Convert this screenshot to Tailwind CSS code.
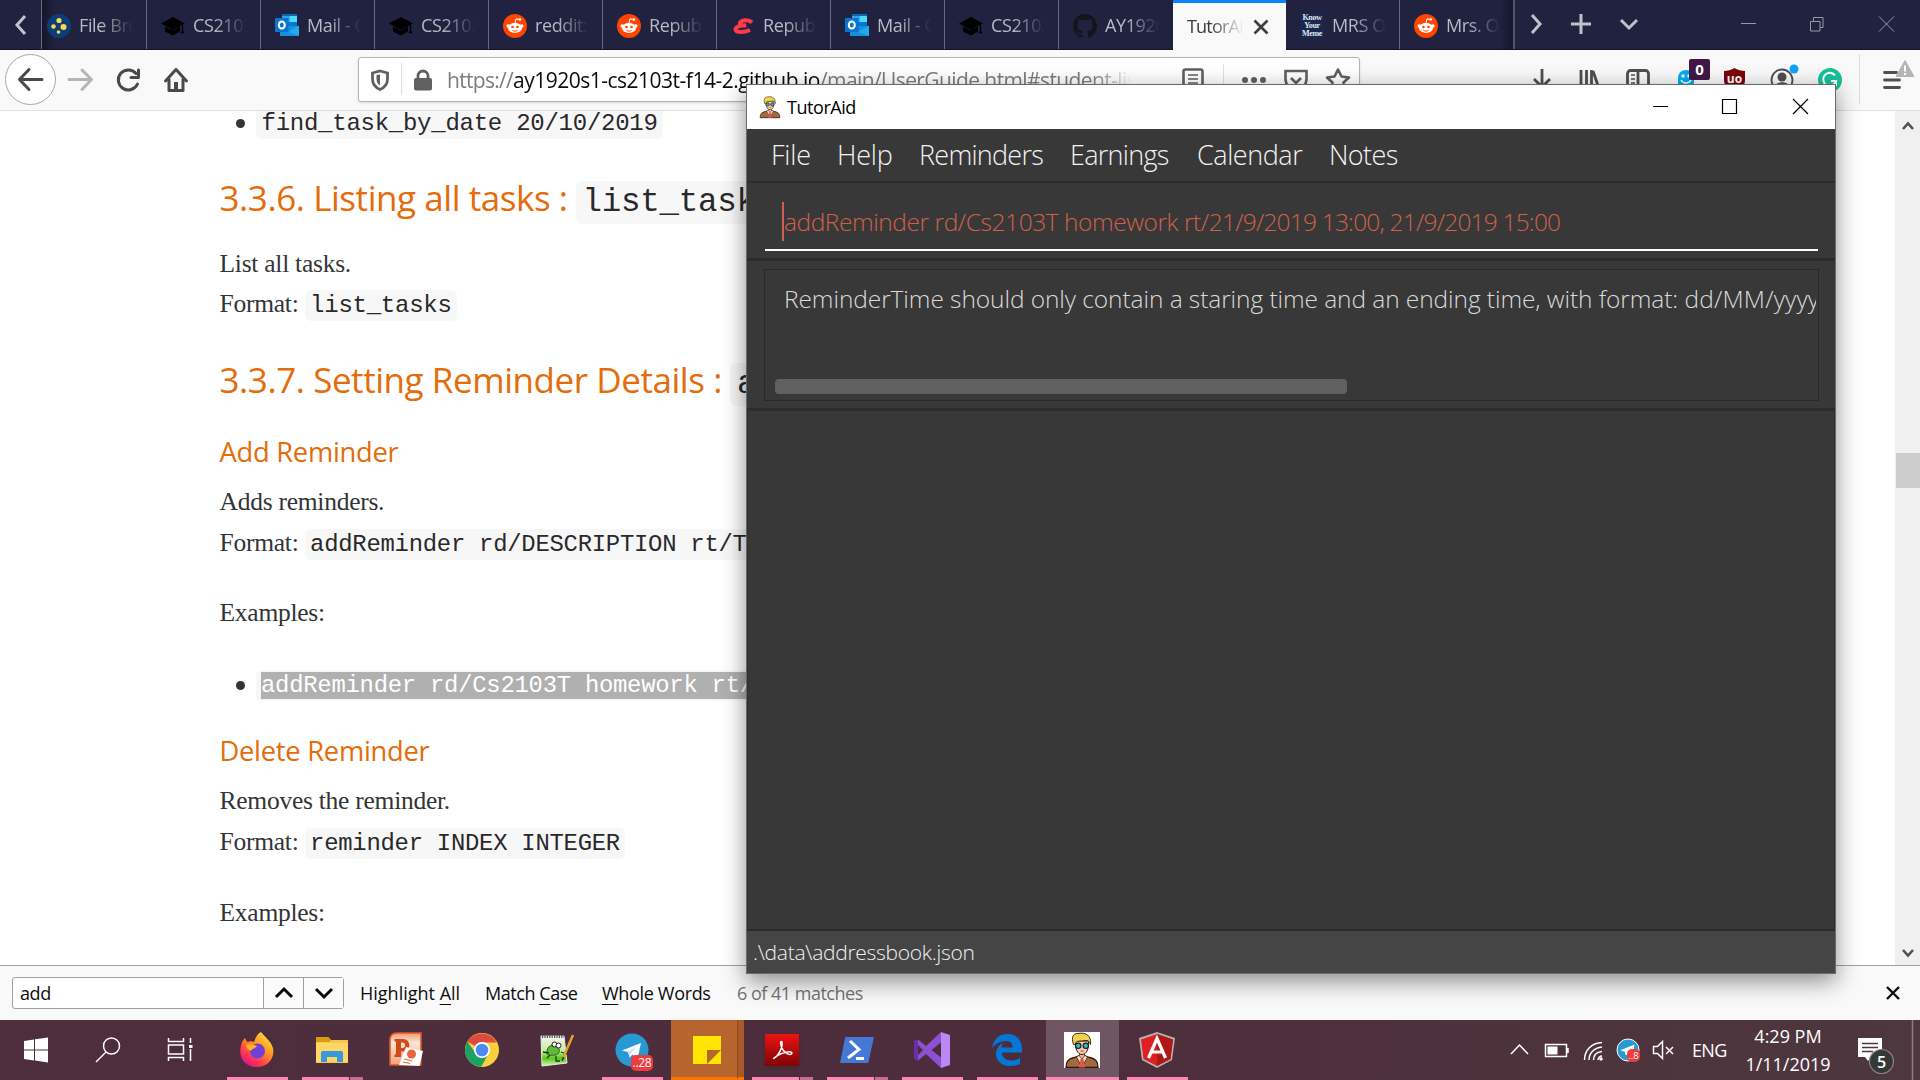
<!DOCTYPE html>
<html lang="en">
<head>
<meta charset="utf-8">
<title>TutorAid</title>
<script src="https://cdn.jsdelivr.net/npm/@tailwindcss/browser@4"></script>
</head>
<body class="w-[1920px] h-[1080px] overflow-hidden bg-white font-['Open_Sans','Noto_Sans',sans-serif]">
<svg class="hidden">
  <symbol id="reddit" viewBox="0 0 24 24"><circle cx="12" cy="12" r="12" fill="#ff4500"/><ellipse cx="12" cy="14" rx="7" ry="5" fill="#fff"/><circle cx="5.2" cy="12" r="1.8" fill="#fff"/><circle cx="18.8" cy="12" r="1.8" fill="#fff"/><path d="M12 9l1-4.200 3.500.8" fill="none" stroke="#fff" stroke-width="1"/><circle cx="16.800" cy="5.600" r="1.400" fill="#fff"/><circle cx="9.500" cy="13" r="1.300" fill="#ff4500"/><circle cx="14.500" cy="13" r="1.300" fill="#ff4500"/><path d="M9.300 16.200c1.500 1.200 4 1.200 5.400 0" fill="none" stroke="#ff4500" stroke-width="1"/></symbol>
  <symbol id="cap" viewBox="0 0 24 24"><path d="M12 3L24 9.500 12 16 0 9.500z" fill="#000"/><path d="M4 12.500v5L12 21.500l7-4v-5L12 16.500z" fill="#000"/><path d="M21.500 10.500v6l1 2h-2l1-2" stroke="#000" stroke-width="1.300"/></symbol>
  <symbol id="outlook" viewBox="0 0 24 24"><path d="M7 0h15v12H7z" fill="#1066b5"/><path d="M7 2h7.500v6H7z" fill="#28a8ea"/><path d="M14.500 2H22v6h-7.500z" fill="#50d9ff"/><path d="M7 8h15v6H7z" fill="#0078d4"/><path d="M5 12h19v10H5z" fill="#1490df"/><path d="M24 11.500L13 18l11 4z" fill="#28a8ea"/><path d="M0 4h13.500v14H0z" fill="#0a74cf"/><ellipse cx="6.800" cy="11" rx="3" ry="3.500" fill="none" stroke="#fff" stroke-width="2"/></symbol>
  <symbol id="telegram" viewBox="0 0 36 36"><circle cx="18" cy="18" r="16.500" fill="#2799d3"/><path d="M8 18.500L27 11l-3.500 15.500-5-4-3 3-1.500-5.500z" fill="#fff"/><path d="M14 20l9-6-7 8-.5 3.500z" fill="#c4dcec"/></symbol>
  <symbol id="tutor" viewBox="0 0 36 36"><path d="M2 35.500c0-6 2-8.500 8-10l5-1.500h6l5 1.500c6 1.500 8 4 8 10z" fill="#a5693a" stroke="#2b1a10" stroke-width="1.300"/><path d="M12.500 25L18 35l5.500-10-3-2h-5z" fill="#f4e0cd" stroke="#3a2416" stroke-width=".8"/><path d="M16.500 27h3l1.500 8.500h-6z" fill="#e2574f"/><path d="M15.500 20h5v4L18 27l-2.500-3z" fill="#eebc95" stroke="#54351f" stroke-width=".8"/><path d="M11.500 9h13c.5 8-2 13.500-6.500 13.500S11 17 11.500 9z" fill="#f6cda8" stroke="#2b1a10" stroke-width="1"/><path d="M9.500 12.500C7 5 9 1.500 14 1.500c8-1.500 13.500 2 12.500 11-1-3-2.500-4.500-5.500-4-5 1-9.500-.5-9.500 4z" fill="#f1d152" stroke="#3b2d10" stroke-width="1"/><circle cx="14.200" cy="13.800" r="2.700" fill="#3fb3bd" stroke="#14252c" stroke-width="1.200"/><circle cx="21.800" cy="13.800" r="2.700" fill="#3fb3bd" stroke="#14252c" stroke-width="1.200"/><path d="M16.500 19h3" stroke="#8d4433" stroke-width="1"/></symbol>
</svg>
<div class="flex flex-col w-full h-full">

  <!-- tab strip -->
  <header class="flex h-[50px] shrink-0 bg-[#20223f] border-b border-[#13142b] text-[18px] text-[#b9bac6]">
    <div class="w-[42px] border-r border-[#6a6b7e] flex items-center justify-center"><svg class="w-5 h-6" viewBox="0 0 20 24" fill="none" stroke="#c3c4ce" stroke-width="3"><path d="M14 3L6 12l8 9"/></svg></div>
    <div class="w-[105px] border-r border-[#6a6b7e] flex items-center pt-[2px] pl-[5px] gap-2 bg-linear-to-r from-[#15162c] to-[#20223f] to-12%"><svg class="size-6 shrink-0" viewBox="0 0 24 24"><circle cx="12" cy="12" r="12" fill="#0b3d78"/><g fill="#ffd94a"><circle cx="12" cy="6.500" r="2.600"/><circle cx="6.500" cy="12.500" r="2.300"/><circle cx="16.500" cy="13" r="3"/><circle cx="11.500" cy="18" r="1.800"/></g></svg><span class="w-[54px] overflow-hidden whitespace-nowrap tracking-[-0.4px] mask-r-from-40%">File Bro</span></div>
    <div class="w-[114px] border-r border-[#6a6b7e] flex items-center pt-[2px] pl-[14px] gap-2"><svg class="size-6 shrink-0"><use href="#cap"/></svg><span class="w-[54px] overflow-hidden whitespace-nowrap tracking-[-0.4px] mask-r-from-40%">CS2103</span></div>
    <div class="w-[114px] border-r border-[#6a6b7e] flex items-center pt-[2px] pl-[14px] gap-2"><svg class="size-6 shrink-0"><use href="#outlook"/></svg><span class="w-[54px] overflow-hidden whitespace-nowrap tracking-[-0.4px] mask-r-from-40%">Mail - O</span></div>
    <div class="w-[114px] border-r border-[#6a6b7e] flex items-center pt-[2px] pl-[14px] gap-2"><svg class="size-6 shrink-0"><use href="#cap"/></svg><span class="w-[54px] overflow-hidden whitespace-nowrap tracking-[-0.4px] mask-r-from-40%">CS2103</span></div>
    <div class="w-[114px] border-r border-[#6a6b7e] flex items-center pt-[2px] pl-[14px] gap-2"><svg class="size-6 shrink-0"><use href="#reddit"/></svg><span class="w-[54px] overflow-hidden whitespace-nowrap tracking-[-0.4px] mask-r-from-40%">reddit: t</span></div>
    <div class="w-[114px] border-r border-[#6a6b7e] flex items-center pt-[2px] pl-[14px] gap-2"><svg class="size-6 shrink-0"><use href="#reddit"/></svg><span class="w-[54px] overflow-hidden whitespace-nowrap tracking-[-0.4px] mask-r-from-40%">Republ</span></div>
    <div class="w-[114px] border-r border-[#6a6b7e] flex items-center pt-[2px] pl-[14px] gap-2"><svg class="size-6 shrink-0" viewBox="0 0 24 24" fill="none" stroke="#ff3b48" stroke-width="4"><path d="M21 8.500C17.500 5 10 6 9 9c-.5 2.500 3 2.800 6 2.200C9 11 4.500 13 4.500 15.500c.5 3.500 9 3 14.500.5"/></svg><span class="w-[54px] overflow-hidden whitespace-nowrap tracking-[-0.4px] mask-r-from-40%">Republ</span></div>
    <div class="w-[114px] border-r border-[#6a6b7e] flex items-center pt-[2px] pl-[14px] gap-2"><svg class="size-6 shrink-0"><use href="#outlook"/></svg><span class="w-[54px] overflow-hidden whitespace-nowrap tracking-[-0.4px] mask-r-from-40%">Mail - O</span></div>
    <div class="w-[114px] border-r border-[#6a6b7e] flex items-center pt-[2px] pl-[14px] gap-2"><svg class="size-6 shrink-0"><use href="#cap"/></svg><span class="w-[54px] overflow-hidden whitespace-nowrap tracking-[-0.4px] mask-r-from-40%">CS2103</span></div>
    <div class="w-[114px] flex items-center pt-[2px] pl-[14px] gap-2"><svg class="size-6 shrink-0" viewBox="0 0 16 16" fill="#14151c"><path d="M8 0C3.580 0 0 3.580 0 8c0 3.540 2.290 6.530 5.470 7.590.4.070.55-.17.55-.38 0-.19-.01-.82-.01-1.490-2.010.37-2.530-.49-2.690-.94-.09-.23-.48-.94-.82-1.130-.28-.15-.68-.52-.01-.53.63-.01 1.080.58 1.230.82.72 1.210 1.870.87 2.330.66.07-.52.28-.87.51-1.070-1.780-.2-3.640-.89-3.640-3.950 0-.87.31-1.590.82-2.150-.08-.2-.36-1.020.08-2.120 0 0 .67-.21 2.200.82.64-.18 1.320-.27 2-.27s1.360.09 2 .27c1.530-1.040 2.200-.82 2.200-.82.44 1.100.16 1.920.08 2.120.51.56.82 1.270.82 2.150 0 3.070-1.870 3.750-3.650 3.950.29.25.54.73.54 1.480 0 1.070-.01 1.930-.01 2.200 0 .21.15.46.55.38A8.010 8.010 0 0016 8c0-4.420-3.580-8-8-8z"/></svg><span class="w-[54px] overflow-hidden whitespace-nowrap tracking-[-0.4px] mask-r-from-40%">AY1920</span></div>
    <div class="w-[113px] h-[50px] bg-[#f9f9fa] border-t-3 border-[#0a84ff] flex items-center pl-[14px] gap-[9px]"><span class="w-[57px] overflow-hidden whitespace-nowrap tracking-[-0.8px] text-[#3a3a3d] mask-r-from-40%">TutorAid</span><svg class="size-4" viewBox="0 0 16 16" stroke="#3e3e40" stroke-width="2.600"><path d="M1.500 1.500l13 13M14.500 1.500l-13 13"/></svg></div>
    <div class="w-[114px] border-r border-[#6a6b7e] flex items-center pt-[2px] pl-[14px] gap-2"><span class="size-6 shrink-0 bg-[#17294f] text-[#e3e6ee] text-[8px] leading-[8px] font-bold font-['Liberation_Serif',serif] text-center tracking-[-0.3px]">Know<br>Your<br>Meme</span><span class="w-[54px] overflow-hidden whitespace-nowrap tracking-[-0.4px] mask-r-from-40%">MRS O</span></div>
    <div class="w-[115px] border-r-2 border-[#55566b] flex items-center pt-[2px] pl-[14px] gap-2 bg-linear-to-l from-[#15162c] to-[#20223f] to-12%"><svg class="size-6 shrink-0"><use href="#reddit"/></svg><span class="w-[54px] overflow-hidden whitespace-nowrap tracking-[-0.4px] mask-r-from-40%">Mrs. Ob</span></div>
    <svg class="w-[404px] h-[49px]" viewBox="1515 0 404 49" fill="none" stroke="#c0c1cb" stroke-width="3"><path d="M1532 15l8 9-8 9M1571 24h20M1581 14v20M1621 20l8 8 8-8"/><g stroke="#9899a8" stroke-width="1"><path d="M1741 23.500h15M1810.500 21.500h9.500v9.500h-9.500zM1813.500 21v-3.500h9.500v10h-3M1879 16.500l15 15M1894 16.500l-15 15"/></g></svg>
  </header>

  <!-- navigation toolbar -->
  <nav class="flex h-[61px] shrink-0 bg-[#f9f9fa] border-b border-[#e0e0e2]">
    <svg class="w-[358px] h-[60px]" viewBox="0 50 358 60" fill="none" stroke="#4a4a4c" stroke-width="3" stroke-linecap="round" stroke-linejoin="round"><circle cx="30.500" cy="79.500" r="25" fill="#fff" stroke="#a8a8a9" stroke-width="1"/><path d="M20 79.500h22M29 69.500L19.500 79.500l9.500 10"/><path stroke="#b5b5b6" d="M69 79.500h22M82 70l9.500 9.500-9.500 10"/><path d="M137.500 84a10 10 0 1 1-1.500-10.500M138.500 70v7.500h-7.500"/><path d="M165.500 81L176 69.500 186.500 81M169 79.500v11h14v-11" /><path d="M176 82v7" stroke-width="4" stroke-linecap="butt"/></svg>
    <div class="w-[1002px] h-[45px] mt-[7px] bg-white border border-[#b4b4b6] rounded-[3px] shadow-sm flex items-center shrink-0">
      <svg class="w-[88px] h-[43px] shrink-0" viewBox="359 58 88 43" fill="none" stroke="#606062"><path stroke-width="2.800" d="M380 71l7.500 2v6c0 5-3 8.500-7.500 10.500-4.500-2-7.500-5.500-7.500-10.500v-6z"/><path d="M380 74.500v11c-2.500-1.500-3.500-4-3.500-6.500v-4z" fill="#606062" stroke="none"/><path d="M401.500 63v32" stroke="#e0e0e2"/><path d="M418 80v-4a5 5 0 0 1 10 0v4" stroke-width="2.800"/><rect x="414" y="78" width="18" height="12.500" rx="2" fill="#606062" stroke="none"/></svg>
      <div class="w-[692px] overflow-hidden whitespace-nowrap text-[21px] text-[#7d7d80] pt-[3px] mask-r-from-93% mask-r-to-99%"><span class="tracking-[-0.7px]">https://</span><span class="text-[#0c0c0d] tracking-[-0.5px]">ay1920s1-cs2103t-f14-2.github.io</span><span class="tracking-[-0.6px]">/main/UserGuide.html#student-lis</span></div>
      <svg class="w-[220px] h-[43px]" viewBox="1139 58 220 43" fill="none" stroke="#606062" stroke-width="2.600"><rect x="1183.500" y="69.500" width="19" height="22" rx="2"/><path stroke-width="1.500" d="M1188 75h10M1188 79h10M1188 83h10"/><path d="M1223.500 64v30" stroke="#e0e0e2" stroke-width="1"/><g fill="#606062" stroke="none"><circle cx="1245" cy="80" r="3"/><circle cx="1254" cy="80" r="3"/><circle cx="1263" cy="80" r="3"/></g><path d="M1285.500 71h21v8a10.500 10.500 0 0 1-21 0zM1291 78l5 5 5-5"/><path stroke-linejoin="round" d="M1338 69.500l3.500 7 7.500 1-5.500 5 1.500 8-7-4-7 4 1.500-8-5.500-5 7.500-1z"/></svg>
    </div>
    <svg class="w-[560px] h-[60px]" viewBox="1360 50 560 60" fill="none" stroke="#4f4f51" stroke-width="2.800"><path d="M1542 69v19M1534 79l8 8 8-8"/><path d="M1581 70v20M1586.500 70v20M1591.500 70v20M1593 71l6.500 19"/><rect x="1627.500" y="70.500" width="21" height="18" rx="3"/><path d="M1638 71v17"/><path stroke-width="1.500" d="M1631 75h4M1631 79h4M1631 83h4"/><path d="M1678 92V78a8 8 0 0 1 16 0v14z" fill="#00aef0" stroke="none"/><circle cx="1683" cy="76" r="1.700" fill="#fff" stroke="none"/><circle cx="1689" cy="76" r="1.700" fill="#fff" stroke="none"/><path d="M1681 80c2 4 8 4 10 0" stroke="#fff" stroke-width="1.500"/><rect x="1689" y="59" width="21" height="21" rx="2" fill="#431847" stroke="none"/><text x="1699.500" y="75" font-size="15" font-weight="700" fill="#fff" stroke="none" text-anchor="middle">0</text><path d="M1734.500 68c3 2 7 3 10.500 3v9c0 6-5 10-10.500 12-5.500-2-10.500-6-10.500-12v-9c3.500 0 7.500-1 10.500-3z" fill="#7c0308" stroke="none"/><text x="1734.500" y="83" font-size="12" font-weight="700" fill="#fff" stroke="none" text-anchor="middle">uo</text><circle cx="1782" cy="80" r="10.500" stroke-width="1.800"/><circle cx="1782" cy="77" r="4.500" fill="#4f4f51" stroke="none"/><path d="M1775 86c1-5 13-5 14 0-2 4-12 4-14 0z" fill="#4f4f51" stroke="none"/><circle cx="1794" cy="69" r="4.500" fill="#0aa6f8" stroke="none"/><circle cx="1830" cy="80" r="12" fill="#15c39a" stroke="none"/><path d="M1835 75.500a6.500 6.500 0 1 0 1 5.500h-5M1836 81v5" stroke="#fff" stroke-width="2"/><path d="M1859.500 54v50" stroke="#dcdcde" stroke-width="1"/><path stroke-linecap="round" d="M1884.500 72.500h12M1884.500 80h15M1884.500 87.500h15"/><path d="M1905 60.500l9 16h-18z" fill="#b5b5b7" stroke="#b5b5b7" stroke-width="1" stroke-linejoin="round"/><path d="M1905 65.500v6M1905 73v2" stroke="#fff" stroke-width="2"/></svg>
  </nav>

  <!-- page -->
  <main class="flex h-[854px] shrink-0 overflow-hidden">
    <article class="flex-1 pl-[219.500px] font-['Liberation_Serif',serif] text-[25.5px] leading-[40px] tracking-[-0.01em] text-[#333436] whitespace-nowrap overflow-hidden">
      <div class="flex h-10 -mt-[9px] pl-[36.500px] relative"><i class="absolute left-4 top-[17px] size-[9px] rounded-full bg-[#333436]"></i><div><code class="font-['Liberation_Mono',monospace] text-[24px] leading-none bg-[#f7f7f8] rounded-md px-[5.500px] py-[2.400px] text-[#29292b]">find_task_by_date 20/10/2019</code></div></div>
      <h3 class="mt-[32px] h-12 leading-[48px] font-['Open_Sans',sans-serif] text-[35px] text-[#e46c0a]"><span class="tracking-[-0.44px]">3.3.6. Listing all tasks :</span><code class="ml-2 font-['Liberation_Mono',monospace] text-[32.500px] leading-none bg-[#f7f7f8] rounded-md px-[7px] py-[3.300px] text-[#29292b]">list_tasks</code></h3>
      <p class="mt-[22px] h-10">List all tasks.</p>
      <p class="h-10">Format: <code class="font-['Liberation_Mono',monospace] text-[24px] leading-none bg-[#f7f7f8] rounded-md px-[5.500px] py-[2.400px] text-[#29292b]">list_tasks</code></p>
      <h3 class="mt-[32px] h-12 leading-[48px] font-['Open_Sans',sans-serif] text-[35px] text-[#e46c0a]"><span class="tracking-[-0.44px]">3.3.7. Setting Reminder Details :</span><code class="ml-2 font-['Liberation_Mono',monospace] text-[32.500px] leading-none bg-[#f7f7f8] rounded-md px-[7px] py-[3.300px] text-[#29292b]">addReminder</code></h3>
      <h4 class="mt-[30px] h-9 leading-9 font-['Open_Sans',sans-serif] text-[27.300px] text-[#e46c0a]">Add Reminder</h4>
      <p class="mt-3 h-10">Adds reminders.</p>
      <p class="mt-px h-10">Format: <code class="font-['Liberation_Mono',monospace] text-[23.9px] leading-none bg-[#f7f7f8] rounded-md px-[5.500px] py-[2.400px] text-[#29292b]">addReminder rd/DESCRIPTION rt/TIME</code></p>
      <p class="mt-[30px] h-10">Examples:</p>
      <div class="flex h-10 mt-[31px] pl-[36px] relative"><i class="absolute left-4 top-[17px] size-[9px] rounded-full bg-[#333436]"></i><div><code class="font-['Liberation_Mono',monospace] text-[23.9px] leading-none bg-[#f7f7f8] rounded-md px-[5.500px] py-[2.400px] text-white"><span class="bg-[#b0b0b0]">addReminder rd/Cs2103T homework rt/21/9/2019</span></code></div></div>
      <h4 class="mt-[29px] h-9 leading-9 font-['Open_Sans',sans-serif] text-[27.300px] text-[#e46c0a]">Delete Reminder</h4>
      <p class="mt-3 h-10">Removes the reminder.</p>
      <p class="mt-px h-10">Format: <code class="font-['Liberation_Mono',monospace] text-[23.9px] leading-none bg-[#f7f7f8] rounded-md px-[5.500px] py-[2.400px] text-[#29292b]">reminder INDEX INTEGER</code></p>
      <p class="mt-[31px] h-10">Examples:</p>
    </article>
    <aside class="w-[25px] bg-[#f0f0f0] flex flex-col items-center pt-[9px]">
      <svg class="w-3 h-3" viewBox="0 0 12 12" fill="none" stroke="#505050" stroke-width="2.600"><path d="M1 9l5-5.500L11 9"/></svg>
      <div class="w-6 h-[35px] bg-[#cdcdcd] mt-[321px]"></div>
      <svg class="w-3 h-3 mt-[459px]" viewBox="0 0 12 12" fill="none" stroke="#505050" stroke-width="2.600"><path d="M1 3l5 5.500L11 3"/></svg>
    </aside>
  </main>

  <!-- find bar -->
  <section class="flex items-center h-[55px] shrink-0 bg-[#f9f9fa] border-t border-[#a0a0a2] text-[18px] text-[#0c0c0d] whitespace-nowrap pl-3 pr-5">
    <div class="flex w-[332px] h-8 border border-[#a0a0a2] rounded-[3px] bg-white leading-[31px]">
      <div class="flex-1 pl-[7px] tracking-[-0.4px]">add</div>
      <div class="w-10 border-l border-[#a0a0a2] flex items-center justify-center bg-[#fbfbfb]"><svg class="w-5 h-4" viewBox="0 0 20 16" fill="none" stroke="#0c0c0d" stroke-width="3"><path d="M2 12l8-8 8 8"/></svg></div>
      <div class="w-10 border-l border-[#a0a0a2] flex items-center justify-center bg-[#fbfbfb]"><svg class="w-5 h-4" viewBox="0 0 20 16" fill="none" stroke="#0c0c0d" stroke-width="3"><path d="M2 4l8 8 8-8"/></svg></div>
    </div>
    <div class="w-[124px] pl-[16px]">Highlight <u class="underline-offset-4">A</u>ll</div>
    <div class="w-[117px] pl-[17px] tracking-[-0.45px]">Match <u class="underline-offset-4">C</u>ase</div>
    <div class="w-[135px] pl-[17px] tracking-[-0.33px]"><u class="underline-offset-4">W</u>hole Words</div>
    <div class="flex-1 pl-[17px] text-[#737375] tracking-[-0.5px]">6 of 41 matches</div>
    <svg class="w-[14px] h-[14px]" viewBox="0 0 14 14" stroke="#0c0c0d" stroke-width="2.400"><path d="M1 1l12 12M13 1L1 13"/></svg>
  </section>

  <!-- taskbar -->
  <footer class="flex h-[60px] shrink-0 bg-linear-to-r from-[#4e2d3c] via-[#4d2c3b] to-[#4e373e] text-white text-[18px]">
    <svg class="w-[219px] h-[60px]" viewBox="0 1020 219 60" fill="none" stroke="#fff" stroke-width="1.500"><path fill="#fff" stroke="none" d="M24 1041l10-1.500v10H24zM35 1039.300l13-1.800v12H35zM24 1050.500h10v10L24 1059zM35 1050.500h13v12l-13-2z"/><circle cx="111.500" cy="1046" r="8"/><path d="M106 1052l-10 10"/><path d="M168.500 1038v3.500h15v-3.500M168.500 1061v-3.500h15v3.500M168.500 1045h15v9h-15zM190.500 1038v5M190.500 1049v12"/><path d="M189 1045h3.500v3h-3.500z" fill="#fff" stroke="none"/></svg>
    <div class="relative w-[75px] flex items-center justify-center"><svg class="size-9" viewBox="0 0 36 36"><defs><linearGradient id="ff" x1="1" y1="0" x2=".3" y2="1"><stop offset="0" stop-color="#fff44f"/><stop offset=".45" stop-color="#ff9a1f"/><stop offset=".8" stop-color="#ff3750"/><stop offset="1" stop-color="#e0128a"/></linearGradient></defs><path d="M22 0c3 4 10 9 12 16 2 10-5 19-16 19S0 27 1.500 17C2 11 4 8 6 6l2 4c3-1 5-1 7 0 2-5 3-8 7-10z" fill="url(#ff)"/><circle cx="18.500" cy="19" r="7.500" fill="#7040d8"/><path d="M7 13c4-2 8 0 11 1-2 3-5 2-6 5-2-1-5-3-5-6z" fill="#ffb21f"/></svg><i class="absolute bottom-0 left-2 w-[61px] h-[3px] bg-[#ff85b5]"></i></div>
    <div class="relative w-[75px] flex items-center justify-center"><svg class="size-8" viewBox="0 0 32 32"><path d="M0 3h12l3 3h17v23H0z" fill="#f8c64a"/><path d="M0 3h12l3 3-2 2H0z" fill="#d99b10"/><path d="M0 9h32v19H0z" fill="#ffd766"/><path d="M5 28V19q0-2 2-2h18q2 0 2 2v9h-6v-5H11v5z" fill="#3a96dd"/></svg><i class="absolute bottom-0 left-2 w-[47px] h-[3px] bg-[#ff85b5]"></i><i class="absolute bottom-0 left-[56px] w-[13px] h-[3px] bg-[#c76d94]"></i></div>
    <div class="relative w-[75px] flex items-center justify-center"><svg class="w-[34px] h-9 mr-0.5" viewBox="0 0 34 36"><defs><linearGradient id="ppt" x2="0" y2="1"><stop stop-color="#ee9a6c"/><stop offset=".3" stop-color="#fbe6d8"/><stop offset="1" stop-color="#f0a279"/></linearGradient></defs><path d="M1 8q0-7 7-7h24v32H1z" fill="url(#ppt)" stroke="#e05a24" stroke-width="1.500"/><path d="M5.500 7h8.500c8.500 0 8.500 12.500 0 12.500h-2V25H5.500v-2.500H7v-13H5.500zM12 10.500v5.500h1.500c3.500 0 3.500-5.500 0-5.500z" fill="#d24a17"/><path d="M17 15l17 4-3.500 15L10 33z" fill="#fff"/><circle cx="22.500" cy="22" r="4.500" fill="#e8663c"/><path d="M15 27l8 2M14 30l7 1.500" stroke="#e8663c"/></svg></div>
    <div class="relative w-[75px] flex items-center justify-center"><svg class="size-[34px]" viewBox="0 0 34 34"><circle cx="17" cy="17" r="17" fill="#fdcf3f"/><path d="M17 17L2.300 8.500A17 17 0 0 1 31.700 9.500H17z" fill="#dd4b3e"/><path d="M2.300 8.500A17 17 0 0 0 16 34l7.500-13-13-1z" fill="#1da261"/><circle cx="17" cy="17" r="8" fill="#fff"/><circle cx="17" cy="17" r="6.300" fill="#4a8af4"/></svg></div>
    <div class="relative w-[75px] flex items-center justify-center"><svg class="size-9" viewBox="0 0 36 36"><defs><linearGradient id="npp" x2="0" y2="1"><stop stop-color="#f4f6f2"/><stop offset=".5" stop-color="#c9ea9a"/><stop offset=".75" stop-color="#55c81c"/><stop offset="1" stop-color="#dff2c8"/></linearGradient></defs><path d="M2 4h23l3 27-25 3z" fill="url(#npp)" stroke="#e8ebe4"/><path d="M3 4.500h22" stroke="#555" stroke-width="3" stroke-dasharray="1.200 1.200"/><path d="M8 19c1-7 9-8 12-2 2 4-3 7-7 6-4 1-6-1-5-4z" fill="#62b83c" stroke="#1f6412"/><circle cx="15.500" cy="12.500" r="2.500" fill="#fff" stroke="#222"/><circle cx="19.500" cy="13.500" r="2.500" fill="#fff" stroke="#222"/><path d="M4 20l6 1M11 23l-3 3M17 24v5h4M22 20l6 2" stroke="#1c3c12" stroke-width="1.300" fill="none"/><path d="M34 3L24 26" stroke="#e0a32b" stroke-width="2.500"/><path d="M24.500 25l-1.500 4" stroke="#4a2c10" stroke-width="1.500"/></svg></div>
    <div class="relative w-[75px] flex items-center justify-center"><svg class="size-9"><use href="#telegram"/></svg><span class="absolute left-[37px] top-[35px] w-[22px] h-4 rounded-[5px] bg-[#f03c3c] text-[12px] leading-4 text-center tracking-[-0.3px]">..28</span><i class="absolute bottom-0 left-2 w-[61px] h-[3px] bg-[#ff85b5]"></i></div>
    <div class="relative w-[75px] flex items-center justify-center"><div class="absolute inset-y-0 left-0.5 w-[73px] bg-[#b7652e] border-b-3 border-[#ff7300]"></div><div class="absolute inset-y-0 left-[68px] w-[7px] bg-[#a85a28] border-l border-[#8f4b20] border-b-3 border-b-[#ff7300]"></div><svg class="relative w-7 h-7" viewBox="0 0 28 28"><path d="M0 0h28v28H0z" fill="#ffe500"/><path d="M14 28V14h14z" fill="#b5672f"/></svg></div>
    <div class="relative w-[75px] flex items-center justify-center"><svg class="size-[34px] shadow" viewBox="0 0 34 34"><defs><linearGradient id="pdf" x2="0" y2="1"><stop stop-color="#f01212"/><stop offset="1" stop-color="#7d0303"/></linearGradient></defs><path d="M0 1h34v32H0z" fill="url(#pdf)"/><path d="M9 25c3-1 9-9 8-16-2-2-2 3 1 8 3 4 8 6 9 3-1-3-11 0-15 3-3 2-4 3-3 2z" fill="none" stroke="#fff" stroke-width="1.500"/></svg><i class="absolute bottom-0 left-2 w-[47px] h-[3px] bg-[#ff85b5]"></i><i class="absolute bottom-0 left-[56px] w-[13px] h-[3px] bg-[#c76d94]"></i></div>
    <div class="relative w-[75px] flex items-center justify-center"><svg class="w-[34px] h-[26px]" viewBox="0 0 34 26"><path d="M6 0h27q1 0 .8 1L28.500 25q-.3 1-1.200 1H1q-1 0-.8-1L5 1q.2-1 1-1z" fill="#4478d4"/><path d="M10 4l9 8.500L8 21M16 21.500h8" fill="none" stroke="#fff" stroke-width="3"/></svg><i class="absolute bottom-0 left-2 w-[47px] h-[3px] bg-[#ff85b5]"></i><i class="absolute bottom-0 left-[56px] w-[13px] h-[3px] bg-[#c76d94]"></i></div>
    <div class="relative w-[75px] flex items-center justify-center"><svg class="size-9" viewBox="0 0 36 36"><path fill-rule="evenodd" d="M0 9.500l4-2 8 6.500L27 0v36L12 22l-8 6.500-4-2zM4 13v10l5-5zM27 10.500L17.500 18l9.500 7.500z" fill="#8e50d2"/><path d="M0 9.500l4-2V13v10 5.500l-4-2z" fill="#6b2fae"/><path d="M27 0l9 3v30l-9 3z" fill="#bb87f4"/></svg><i class="absolute bottom-0 left-2 w-[61px] h-[3px] bg-[#ff85b5]"></i></div>
    <div class="relative w-[75px] flex items-center justify-center"><svg class="w-[30px] h-8" viewBox="0 0 30 32"><path d="M0 14C2 4 8 0 16 0c9 0 14 7 14 15v3.500H10c0 5 4 8 9 8 4 0 6-1 9-2.500v6c-3 1.500-6 2-10 2C9 32 4 26 4 20c0-5 3-9 7-11-1 2-1.500 3-1.500 4.500h11C20.500 10 19 7 14.500 7 8 7 3 10 0 14z" fill="#0478d7"/></svg><i class="absolute bottom-0 left-2 w-[61px] h-[3px] bg-[#ff85b5]"></i></div>
    <div class="relative w-[75px] flex items-center justify-center"><div class="absolute inset-y-0 left-0.5 w-[73px] bg-[#705663] border-b-3 border-[#ff85b5]"></div><svg class="relative size-9 bg-white"><use href="#tutor"/></svg></div>
    <div class="relative w-[75px] flex items-center justify-center"><svg class="size-9" viewBox="0 0 36 36"><path d="M18 0l18 6-3 22-15 8-15-8L0 6z" fill="#b3b3b3"/><path d="M18 2l16 5.500-2.500 19.500L18 34 4.500 27 2 7.500z" fill="#df2020"/><path d="M18 2l16 5.500-2.500 19.500L18 34z" fill="#b01818"/><path d="M9.500 26L18 6.500 26.500 26M13 20h10" fill="none" stroke="#fff" stroke-width="3.200"/></svg><i class="absolute bottom-0 left-2 w-[61px] h-[3px] bg-[#ff85b5]"></i></div>
    <svg class="w-[489px] h-[60px]" viewBox="1194 1020 489 60" fill="none" stroke="#fff" stroke-width="1.500"><path d="M1511 1054l8.500-9 8.500 9"/><path d="M1545.500 1044.500h21v12h-21zM1568 1048v5"/><path d="M1547.500 1046.500h10v8h-10z" fill="#fff" stroke="none"/><path d="M1584.500 1060c0-10 7-17 17.500-17.500M1589 1060c0-7 5-12 13-13M1593.500 1060c0-5 3-8 8.500-8.500M1598 1060c0-2 2-4 4-4"/><circle cx="1601" cy="1059" r="1.800" fill="#fff" stroke="none"/><use href="#telegram" x="1616" y="1038" width="24" height="24"/><rect x="1627" y="1049" width="13" height="13" rx="5" fill="#f03c3c" stroke="none"/><text x="1633.500" y="1059" font-size="9.500" fill="#fff" stroke="none" text-anchor="middle">..8</text><path d="M1653.500 1046.500h4l5-5v17l-5-5h-4zM1666 1047l7 7M1673 1047l-7 7"/></svg>
    <div class="w-[57px] pl-[9px] leading-[60px] whitespace-nowrap tracking-[-0.7px]">ENG</div>
    <div class="w-[96px] text-center leading-[28px] pt-[2px] whitespace-nowrap"><div>4:29 PM</div><div>1/11/2019</div></div>
    <svg class="w-[84px] h-[60px]" viewBox="1836 1020 84 60"><path d="M1858 1038h24v19h-11l-3 4-3-4h-7z" fill="#fff"/><path d="M1862 1043.500h16M1862 1047.500h16M1862 1051.500h11" stroke="#4e373e" stroke-width="1.300"/><circle cx="1881.500" cy="1061.500" r="12" fill="#343838" stroke="#8c8285" stroke-width="1.200"/><text x="1881.500" y="1067.500" font-size="16" font-weight="600" fill="#fff" text-anchor="middle">5</text><path d="M1912.500 1020v60" stroke="#8d7d83" stroke-width="1.500"/></svg>
  </footer>
</div>

<!-- TutorAid window -->
<div class="absolute left-[746px] top-[84px] w-[1090px] h-[890px] flex flex-col border border-[#6a6a6a] bg-[#383838] shadow-[0_7px_22px_rgba(0,0,0,0.45)] whitespace-nowrap overflow-hidden">
  <div class="flex items-center h-11 shrink-0 bg-white pl-3 text-[18px] text-black">
    <svg class="size-6 shrink-0"><use href="#tutor" width="22" height="24"/></svg>
    <div class="flex-1 pl-1 pt-px tracking-[-0.45px]">TutorAid</div>
    <svg class="w-[183px] h-11" viewBox="1652 85 183 44" fill="none" stroke="#000" stroke-width="1.200"><path d="M1653 106.500h15M1722.500 99.500h14v14h-14zM1793 99l15 15M1808 99l-15 15"/></svg>
  </div>
  <div class="flex h-[54px] shrink-0 border-b-2 border-[#2c2c2c] font-light text-[27px] leading-[51px] text-[#f2f2f2]">
    <div class="w-[90px] pl-[24px] tracking-[-0.2px]">File</div>
    <div class="w-[82px] tracking-[-0.2px]">Help</div>
    <div class="w-[151px] tracking-[-0.75px]">Reminders</div>
    <div class="w-[127px] tracking-[-0.7px]">Earnings</div>
    <div class="w-[132px] tracking-[-0.45px]">Calendar</div>
    <div class="tracking-[-0.6px]">Notes</div>
  </div>
  <div class="h-[78px] shrink-0 border-b-3 border-[#2c2c2c] px-[17px] pl-[18px]">
    <div class="h-[68px] border-b-2 border-white pl-[17px] pt-[19px]"><div class="border-l-2 border-[#d0604a] h-[39px] leading-[39px] text-[24.500px] font-light text-[#d0604a]"><span class="tracking-[-0.43px]">addReminder rd/Cs2103T homework rt/</span><span class="tracking-[-0.8px]">21/9/2019 13:00, 21/9/2019 15:00</span></div></div>
  </div>
  <div class="h-[150px] shrink-0 border-b-3 border-[#2c2c2c] pl-[17px] pr-4 pt-2">
    <div class="h-[132px] border border-[#292929] pr-[2px] flex flex-col justify-between pt-[10px] pb-[6px]">
      <div class="overflow-hidden pl-[19px] leading-[38px] text-[24.500px] font-[350] text-[#dadada]"><span class="tracking-[-0.08px]">ReminderTime should only contain a staring time and an ending time, with format:</span><span class="tracking-[0.15px]"> dd/MM/yyyy HH:mm</span></div>
      <div class="ml-[10px] w-[572px] h-[15px] rounded bg-[#606060]"></div>
    </div>
  </div>
  <div class="flex-1 border-x border-[#2e2e2e]"></div>
  <div class="h-[44px] shrink-0 border-t-2 border-[#2c2c2c] bg-[#454545] pl-[6px] text-[21px] leading-[43px] font-light text-[#f2f2f2] tracking-[-0.28px]">.\data\addressbook.json</div>
</div>
</body>
</html>
